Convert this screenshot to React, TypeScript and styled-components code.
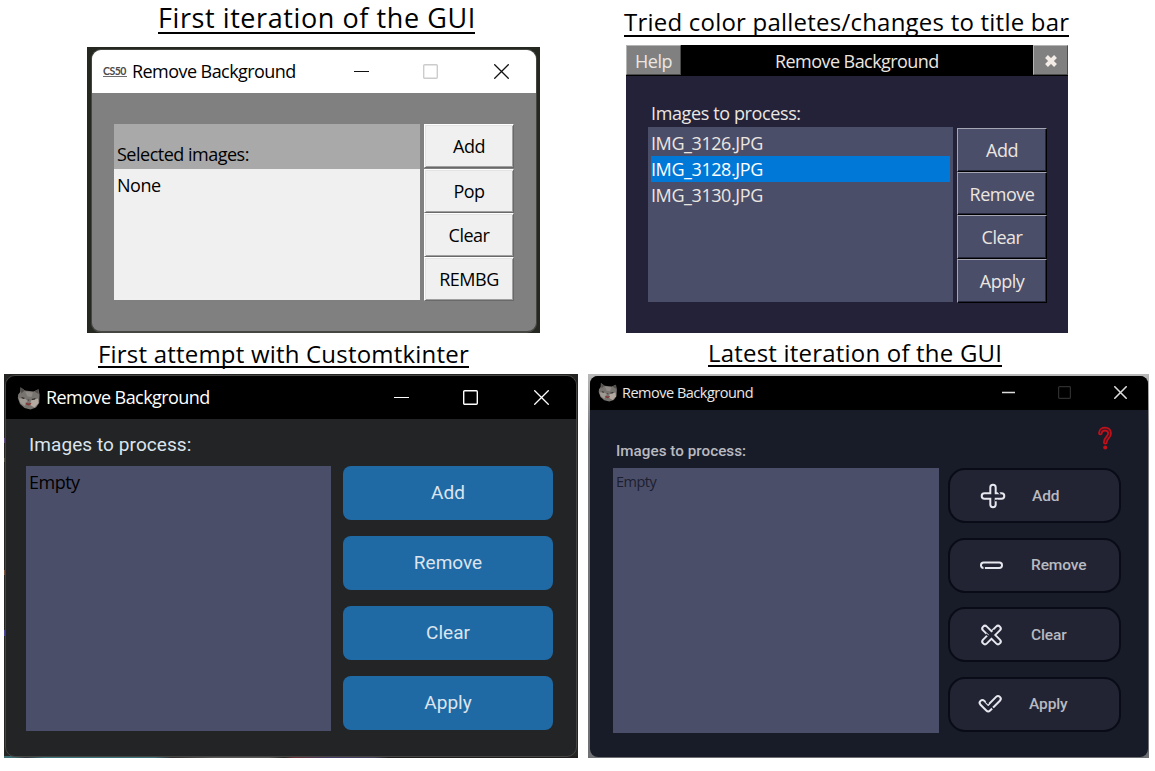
import React from "react";
import styled, { createGlobalStyle } from "styled-components";

const SEGOE = '"Open Sans", "Noto Sans", sans-serif';
const ROBOTO = 'Roboto, sans-serif';
const LATO = 'Lato, "Open Sans", sans-serif';

const GlobalStyle = createGlobalStyle`
  *, *::before, *::after { box-sizing: border-box; }
  body { margin: 0; background: #fff; overflow: hidden; }
  button { margin: 0; padding: 0; border: 0; font: inherit; }
  svg { display: block; flex: none; }
`;

const Page = styled.main`
  display: grid;
  grid-template-columns: 584px 571px;
  grid-template-rows: 333px 438px;
  width: 1155px;
  height: 771px;
  background: #fff;
`;

const Panel = styled.section<{ $top: number; $left: number }>`
  display: flex;
  flex-direction: column;
  align-items: flex-start;
  padding: ${(p) => p.$top}px 0 0 ${(p) => p.$left}px;
`;

const Heading = styled.h2<{ $size: number; $line: number; $width: number; $indent: number; $gap: number; $track: number }>`
  margin: 0 0 ${(p) => p.$gap}px ${(p) => p.$indent}px;
  width: ${(p) => p.$width}px;
  border-bottom: 2px solid #000;
  font: 400 ${(p) => p.$size}px/${(p) => p.$line}px ${SEGOE};
  letter-spacing: ${(p) => p.$track}px;
  color: #000;
  white-space: nowrap;
`;

const Text = styled.span<{ $size?: number; $track?: number; $color?: string; $font?: string; $weight?: number }>`
  font: ${(p) => p.$weight ?? 400} ${(p) => p.$size ?? 18}px/26px ${(p) => p.$font ?? SEGOE};
  letter-spacing: ${(p) => p.$track ?? -0.5}px;
  color: ${(p) => p.$color ?? "#000"};
  white-space: nowrap;
`;

/* ---------- shared window chrome ---------- */

const TitleBar = styled.header<{ $height: number; $bg: string; $pad: string; $gap: number }>`
  display: flex;
  align-items: center;
  gap: ${(p) => p.$gap}px;
  height: ${(p) => p.$height}px;
  padding: ${(p) => p.$pad};
  background: ${(p) => p.$bg};
`;

const TitleText = styled(Text)<{ $lift?: number; $drop?: number }>`
  padding-top: ${(p) => p.$drop ?? 0}px;
  padding-bottom: ${(p) => p.$lift ?? 2}px;
`;

const Controls = styled.div`
  display: flex;
  align-items: center;
  margin-left: auto;
`;

const Control = styled.svg<{ $after?: number }>`
  margin-right: ${(p) => p.$after ?? 0}px;
`;

type CaptionProps = { size: number; gaps: [number, number]; color: string; maxColor: string; stroke?: number };

function CaptionButtons({ size, gaps, color, maxColor, stroke = 1.3 }: CaptionProps) {
  return (
    <Controls>
      <Control $after={gaps[0]} width={size} height={size} viewBox="0 0 15 15">
        <path d="M0 7.5H15" stroke={color} strokeWidth={Math.max(1, stroke - 0.3)} />
      </Control>
      <Control $after={gaps[1]} width={size} height={size} viewBox="0 0 15 15">
        <rect x="0.7" y="0.7" width="13.6" height="13.6" rx="1" fill="none" stroke={maxColor} strokeWidth="1.4" />
      </Control>
      <Control width={size} height={size} viewBox="0 0 15 15">
        <path d="M0.3 0.3L14.7 14.7M14.7 0.3L0.3 14.7" stroke={color} strokeWidth={stroke} />
      </Control>
    </Controls>
  );
}

function CatIcon({ size }: { size: number }) {
  return (
    <svg width={size} height={size} viewBox="0 0 24 24">
      <path d="M3.5 1.2L8 4.6L16.5 5.4L21.5 3.2L22.6 9L22.2 17L19 21.5L13.5 23.4L7.5 22L3 18L.8 12L1.2 8.6L3.2 6Z" fill="#77736f" />
      <path d="M3.5 1.2L7.500 4.600L4.400 7.500ZM17.500 5.400L21.500 3.200L21.600 8Z" fill="#514c49" />
      <path d="M8 5.500L16 6.400L14.500 11L10.500 10.500Z" fill="#8e8984" />
      <path d="M1.800 12.500L7.500 12L10.500 15L7.500 20L3.400 17Z" fill="#a09a94" />
      <path d="M14 14.500L21 12.500L21.500 17L17.500 21.500L13 19Z" fill="#b5aaa1" />
      <path d="M4.600 11L8 12L7 12.900L4.600 12.300ZM14.600 13L18.600 12L18 13.500L15 13.900Z" fill="#2c2826" />
      <path d="M10.400 13.400L12.600 13.600L11.600 15Z" fill="#4a3f3c" />
      <path d="M8.500 16.600L12 17.400L14.500 16.800L13.800 18.600L11.400 19.400L9 18.400Z" fill="#813a38" />
    </svg>
  );
}

/* ---------- first iteration ---------- */

const ClassicFrame = styled.div`
  width: 453px;
  height: 286px;
  padding: 2px 3px 0 4px;
  background: #252721;
`;

const ClassicWindow = styled.div`
  height: 284px;
  border: 1px solid #454642;
  border-bottom-width: 2px;
  border-radius: 10px;
  background: #808080;
  overflow: hidden;
`;

const ClassicBody = styled.div`
  display: flex;
  gap: 4px;
  padding: 31px 0 0 22px;
`;

const ClassicList = styled.div`
  width: 306px;
  height: 176px;
  background: #f0f0f0;
`;

const ClassicListHead = styled.div`
  height: 45px;
  padding: 17px 0 0 3px;
  background: #a9a9a9;
`;

const ClassicListRow = styled.div`
  padding: 3px 0 0 3px;
`;

const Cs50Mark = styled.span`
  width: 24px;
  height: 11px;
  border-bottom: 1px solid #6d6d6d;
  font: 700 10.500px/10px ${LATO};
  letter-spacing: -0.500px;
  color: #4a4a4a;
`;

const Stack = styled.div<{ $gap?: number }>`
  display: flex;
  flex-direction: column;
  gap: ${(p) => p.$gap ?? 0}px;
`;

const ClassicButton = styled.button`
  display: flex;
  align-items: center;
  justify-content: center;
  width: 90px;
  height: 44px;
  border: 1px solid;
  border-color: #fff #696969 #696969 #fff;
  background: #f0f0f0;
  box-shadow: inset 1px 1px #e3e3e3, inset -1px -1px #a0a0a0;

  &:first-child {
    margin-bottom: 1px;
  }
`;

/* ---------- palette iteration ---------- */

const PaletteWindow = styled.div`
  width: 442px;
  height: 288px;
  background: #232239;
`;

const PaletteBar = styled.header`
  display: grid;
  grid-template-columns: 55px 1fr 35px;
  height: 31px;
  background: #000;
`;

const BarButton = styled.button`
  display: flex;
  align-items: center;
  justify-content: center;
  height: 30px;
  padding-top: 2px;
  border: 1px solid;
  border-color: #b4b4b4 #4c4c4c #4c4c4c #b4b4b4;
  background: #808080;
`;

const BarTitle = styled.div`
  display: flex;
  padding: 3px 0 0 94px;
`;

const PaletteBody = styled.div`
  display: grid;
  grid-template-columns: 305px 90px;
  column-gap: 4px;
  padding: 24px 0 0 22px;
`;

const PaletteLabel = styled.div`
  grid-column: 1 / -1;
  height: 27px;
  padding-left: 3px;
`;

const PaletteList = styled.div`
  display: flex;
  flex-direction: column;
  height: 175px;
  padding: 3px;
  background: #4b4e69;
`;

const PaletteRow = styled.div<{ $selected?: boolean }>`
  display: flex;
  height: 26px;
  background: ${(p) => (p.$selected ? "#0078d7" : "transparent")};
`;

const PaletteButtons = styled.div`
  display: grid;
  grid-template-rows: 44px 43px 44px 44px;
  padding-top: 1px;
`;

const PaletteButton = styled.button`
  display: flex;
  align-items: center;
  justify-content: center;
  border: 1px solid;
  border-color: #a5a6b4 #000 #000 #a5a6b4;
  background: #4b4e69;
  box-shadow: inset -1px -1px #25273a;
`;

/* ---------- customtkinter iteration ---------- */

const DarkFrame = styled.div`
  width: 574px;
  height: 384px;
  padding: 1px;
  background:
    linear-gradient(90deg, #3f6f75 0 10px, #30343a 22px, #3c747c 40px 150px, #303030 168px, #5a5a5a 210px 265px, #272727 280px, #6b3036 290px, #453b6b 325px, #45415e 370px, #201e1e 385px) 0 100% / 100% 2px no-repeat,
    linear-gradient(180deg, transparent 0 64px, #5d477d 64px 69px, transparent 69px 84px, #4c4e42 84px 88px, transparent 88px 196px, #77503b 196px 201px, transparent 201px 256px, #48459b 256px 262px, transparent 262px) 0 0 / 2px 100% no-repeat,
    #252624;
`;

const DarkWindow = styled.div`
  height: 382px;
  border: 1px solid #454644;
  border-radius: 10px;
  background: #222425;
  overflow: hidden;
`;

const DarkBody = styled.div`
  display: grid;
  grid-template-columns: 305px 210px;
  column-gap: 12px;
  padding: 13px 0 0 20px;
`;

const DarkLabel = styled.div`
  grid-column: 1 / -1;
  height: 34px;
  padding-left: 3px;
`;

const ListBox = styled.div<{ $top: number }>`
  height: 265px;
  padding: ${(p) => p.$top}px 0 0 3px;
  background: #4b4e69;
`;

const BlueButton = styled.button`
  display: flex;
  align-items: center;
  justify-content: center;
  height: 54px;
  border-radius: 8px;
  background: #1f6aa5;
`;

/* ---------- latest iteration ---------- */

const LatestFrame = styled.div`
  width: 561px;
  height: 384px;
  padding: 2px 1px 1px 2px;
  background: linear-gradient(180deg, #b9b9b9, #77787c 60px, #6f7074);
`;

const LatestWindow = styled.div`
  height: 381px;
  border-radius: 8px;
  background: #181c28;
  overflow: hidden;
`;

const LatestBody = styled.div`
  display: grid;
  grid-template-columns: 326px 173px;
  column-gap: 9px;
  padding: 16px 0 0 23px;
`;

const LatestHead = styled.div`
  grid-column: 1 / -1;
  display: flex;
  justify-content: space-between;
  height: 42px;
  padding: 0 8px 0 3px;
`;

const LatestLabel = styled.div`
  padding-top: 12px;
`;

const OutlineButton = styled.button`
  display: grid;
  grid-template-columns: 28px 1fr;
  align-items: center;
  justify-items: start;
  height: 55px;
  padding: 0 0 0 28px;
  border: 2px solid #090c17;
  border-radius: 17px;
  background: #222433;
`;

const OutlineLabel = styled.span<{ $indent: number }>`
  display: flex;
  padding-left: ${(p) => p.$indent}px;
`;

/* A hollow rounded glyph: a wide light stroke with a narrower face-coloured one inside, and notches that break the rim. */
function HollowIcon({ shape, notches }: { shape: string; notches: string }) {
  return (
    <svg width="28" height="26" viewBox="0 0 28 26" fill="none" strokeLinecap="round" strokeLinejoin="round">
      <path d={shape} stroke="#e6e6ee" strokeWidth="7.4" />
      <path d={shape} stroke="#222433" strokeWidth="3.4" />
      <path d={notches} stroke="#222433" strokeWidth="1.4" strokeLinecap="butt" />
    </svg>
  );
}

function HelpIcon() {
  const hook = "M3.400 7C3.600 1.800 12.600 1.800 12.600 7.200C12.600 11.200 8.300 12 8.300 16.200";
  return (
    <svg width="16" height="25" viewBox="0 0 16 25" fill="none" strokeLinecap="round" strokeLinejoin="round">
      <path d={hook} stroke="#c1121c" strokeWidth="4.600" />
      <path d={hook} stroke="#4a1420" strokeWidth="1.200" />
      <circle cx="8.200" cy="21.600" r="2" fill="#c1121c" />
    </svg>
  );
}

const latestActions = [
  { label: "Add", indent: 26, shape: "M15 4.400V21.600M6.400 13H23.600", notches: "M20 8.500L22 11M17 17.500H20" },
  { label: "Remove", indent: 25, shape: "M5.700 13.200H21.300", notches: "M6.200 14.500V18" },
  { label: "Clear", indent: 25, shape: "M7 6.500L20 19.500M20 6.500L7 19.500", notches: "M15 8L17 10.500M8 12L11 14.500" },
  { label: "Apply", indent: 23, shape: "M4.400 11.800L10.200 17.600L20 7.800", notches: "M13.500 16L16 18.500M8 10.500L10.500 13" },
];

export default function App() {
  return (
    <>
      <GlobalStyle />
      <Page>
        <Panel $top={4} $left={87}>
          <Heading $size={27} $line={28} $width={317} $indent={71} $gap={13} $track={0.58}>First iteration of the GUI</Heading>
          <ClassicFrame>
            <ClassicWindow>
              <TitleBar $height={43} $bg="#fff" $pad="0 27px 0 11px" $gap={5}>
                <Cs50Mark>CS50</Cs50Mark>
                <TitleText $track={-0.56}>Remove Background</TitleText>
                <CaptionButtons size={15} gaps={[54, 56]} color="#111" maxColor="#ccc" />
              </TitleBar>
              <ClassicBody>
                <ClassicList>
                  <ClassicListHead><Text>Selected images:</Text></ClassicListHead>
                  <ClassicListRow><Text>None</Text></ClassicListRow>
                </ClassicList>
                <Stack>
                  {["Add", "Pop", "Clear", "REMBG"].map((label) => (
                    <ClassicButton key={label}><Text>{label}</Text></ClassicButton>
                  ))}
                </Stack>
              </ClassicBody>
            </ClassicWindow>
          </ClassicFrame>
        </Panel>

        <Panel $top={9} $left={42}>
          <Heading $size={24} $line={26} $width={445} $indent={-2} $gap={8} $track={0.22}>Tried color palletes/changes to title bar</Heading>
          <PaletteWindow>
            <PaletteBar>
              <BarButton><Text $color="#ece6e0">Help</Text></BarButton>
              <BarTitle><Text $color="#ece6e0" $track={-0.56}>Remove Background</Text></BarTitle>
              <BarButton>
                <svg width="14" height="14" viewBox="0 0 14 14">
                  <path d="M2.500 2.500L11.500 11.500M11.500 2.500L2.500 11.500" stroke="#f3ebe5" strokeWidth="4" />
                </svg>
              </BarButton>
            </PaletteBar>
            <PaletteBody>
              <PaletteLabel><Text $color="#ece6e0" $track={-0.38}>Images to process:</Text></PaletteLabel>
              <PaletteList>
                {["IMG_3126.JPG", "IMG_3128.JPG", "IMG_3130.JPG"].map((name, i) => (
                  <PaletteRow key={name} $selected={i === 1}>
                    <Text $color={i === 1 ? "#fff" : "#ece6e0"} $track={-0.42}>{name}</Text>
                  </PaletteRow>
                ))}
              </PaletteList>
              <PaletteButtons>
                {["Add", "Remove", "Clear", "Apply"].map((label) => (
                  <PaletteButton key={label}><Text $color="#ece6e0">{label}</Text></PaletteButton>
                ))}
              </PaletteButtons>
            </PaletteBody>
          </PaletteWindow>
        </Panel>

        <Panel $top={9} $left={4}>
          <Heading $size={24} $line={24} $width={371} $indent={94} $gap={6} $track={0.2}>First attempt with Customtkinter</Heading>
          <DarkFrame>
            <DarkWindow>
              <TitleBar $height={43} $bg="#000" $pad="0 27px 0 11px" $gap={5}>
                <CatIcon size={24} />
                <TitleText $color="#fff" $track={-0.56}>Remove Background</TitleText>
                <CaptionButtons size={15} gaps={[54, 56]} color="#fff" maxColor="#fff" />
              </TitleBar>
              <DarkBody>
                <DarkLabel><Text $font={ROBOTO} $size={19} $color="#dce4ee" $track={0.08}>Images to process:</Text></DarkLabel>
                <ListBox $top={3}><Text>Empty</Text></ListBox>
                <Stack $gap={16}>
                  {["Add", "Remove", "Clear", "Apply"].map((label) => (
                    <BlueButton key={label}><Text $font={ROBOTO} $size={19} $color="#dce4ee" $track={0}>{label}</Text></BlueButton>
                  ))}
                </Stack>
              </DarkBody>
            </DarkWindow>
          </DarkFrame>
        </Panel>

        <Panel $top={8} $left={4}>
          <Heading $size={24} $line={24} $width={294} $indent={120} $gap={7} $track={0.2}>Latest iteration of the GUI</Heading>
          <LatestFrame>
            <LatestWindow>
              <TitleBar $height={34} $bg="#000" $pad="0 21px 2px 8px" $gap={4}>
                <CatIcon size={20} />
                <TitleText $lift={0} $drop={2} $size={14.5} $color="#e8e8e8" $weight={500} $track={-0.5}>Remove Background</TitleText>
                <CaptionButtons size={13} gaps={[43, 43]} color="#ddd" maxColor="#2e2e2e" stroke={1.8} />
              </TitleBar>
              <LatestBody>
                <LatestHead>
                  <LatestLabel><Text $font={ROBOTO} $size={15.2} $weight={500} $color="#b9bac0" $track={0.04}>Images to process:</Text></LatestLabel>
                  <HelpIcon />
                </LatestHead>
                <ListBox $top={1}><Text $size={14.5} $color="#1c1e30">Empty</Text></ListBox>
                <Stack $gap={14.6}>
                  {latestActions.map(({ label, indent, shape, notches }) => (
                    <OutlineButton key={label}>
                      <HollowIcon shape={shape} notches={notches} />
                      <OutlineLabel $indent={indent}><Text $font={ROBOTO} $size={15.5} $weight={500} $color="#b9bac0" $track={-0.1}>{label}</Text></OutlineLabel>
                    </OutlineButton>
                  ))}
                </Stack>
              </LatestBody>
            </LatestWindow>
          </LatestFrame>
        </Panel>
      </Page>
    </>
  );
}
